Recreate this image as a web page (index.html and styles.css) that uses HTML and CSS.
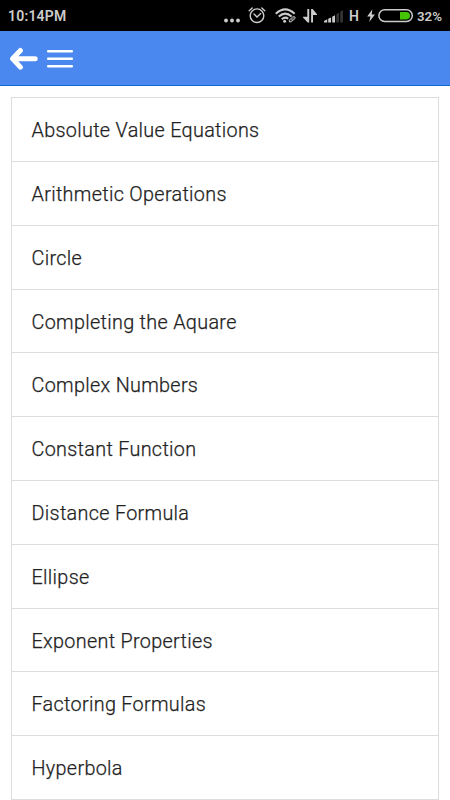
FILE: index.html
```html
<!DOCTYPE html>
<html lang="en">
<head>
    <meta charset="UTF-8">
    <meta name="viewport" content="width=device-width, initial-scale=1.0">
    <title>Algebra Formulas</title>
    <link rel="stylesheet" href="styles.css">
</head>
<body>
    <div class="status-bar">
        <span class="time">10:14PM</span>
        <div class="status-icons">
            <svg class="dots" width="16" height="30" viewBox="0 0 16 30" fill="#ccc">
                <circle cx="2" cy="20.5" r="1.9"/>
                <circle cx="8" cy="20.5" r="1.9"/>
                <circle cx="14" cy="20.5" r="1.9"/>
            </svg>
            <svg class="alarm" width="18" height="30" viewBox="0 0 18 30" fill="none" stroke="#ccc" stroke-width="1.4" stroke-linecap="round">
                <circle cx="9" cy="15.7" r="6.8"/>
                <path d="M1.2 10.7 L4.2 8 M13.8 8 L16.8 10.7 M6 14 L9 17 L12.7 13.6"/>
            </svg>
            <svg class="wifi" width="22" height="30" viewBox="0 0 22 30" fill="none" stroke="#ccc" stroke-width="2">
                <path d="M.8 13.7 Q10.2 5 19.6 13.7"/>
                <path d="M3.8 16.6 Q10.2 10.6 16.6 16.6"/>
                <path d="M6.8 19.2 Q10.2 16.2 13.2 18.8"/>
                <circle cx="9.6" cy="21.3" r="1.5" fill="#ccc" stroke="none"/>
                <path d="M14.2 20.2 L17.8 16.9 Q20.5 16 20.2 18.3 L16.3 21.8 Q13.6 22.8 14.2 20.2 M15.7 20.6 L18.7 18" stroke-width="1"/>
            </svg>
            <svg class="data" width="15" height="30" viewBox="0 0 15 30" fill="#ccc">
                <path d="M4.3 9 H6.2 V22.6 H4.7 L0 17.4 V16.8 H4.3 Z"/>
                <path d="M8.1 9 H9.7 L14 14.3 V15 H10 V22.6 H8.1 Z"/>
            </svg>
            <svg class="signal" width="20" height="30" viewBox="0 0 20 30" fill="#ccc">
                <path d="M0 22.5 V21 L3.2 19.3 V22.5 Z"/>
                <path d="M4.2 22.5 V18.8 L7 17.4 V22.5 Z"/>
                <path d="M8.2 22.5 V16.8 L11 15.2 V22.5 Z"/>
                <path d="M12.3 22.5 V14.2 L15 12.5 V22.5 Z M16.2 22.5 V11.7 L19 10 V22.5 Z" fill="#333"/>
            </svg>
            <span class="network">H</span>
            <svg class="bolt" width="8" height="30" viewBox="0 0 8 30" fill="#ccc">
                <path d="M5.4 9.3 L.2 16.4 H3.4 L2.3 22 L7.9 14.6 H4.7 Z"/>
            </svg>
            <svg class="battery" width="36" height="30" viewBox="0 0 36 30">
                <rect x=".9" y="9.8" width="33.4" height="11.7" rx="5.8" fill="none" stroke="#ccc" stroke-width="1.5"/>
                <path d="M22 12 H28.5 Q32 12.3 32 15.7 Q32 19 28.5 19.4 H22 Z" fill="#45c405"/>
            </svg>
            <span class="percent">32%</span>
        </div>
    </div>

    <nav>
        <a class="back">
            <svg width="28" height="24" viewBox="0 0 28 24" fill="none" stroke="#fff" stroke-width="5" stroke-linecap="round" stroke-linejoin="round">
                <path d="M25.2 12.8 H4 M10.4 4.5 L2.6 12.8 L10.4 21.1"/>
            </svg>
        </a>
        <a class="menu">
            <svg width="26" height="24" viewBox="0 0 26 24" fill="#fff">
                <rect x="0" y="4" width="26" height="2.6" rx="1"/>
                <rect x="0" y="11.4" width="26" height="2.6" rx="1"/>
                <rect x="0" y="19" width="26" height="2.6" rx="1"/>
            </svg>
        </a>
    </nav>

    <ul class="topic-list">
        <li>Absolute Value Equations</li>
        <li>Arithmetic Operations</li>
        <li>Circle</li>
        <li>Completing the Aquare</li>
        <li>Complex Numbers</li>
        <li>Constant Function</li>
        <li>Distance Formula</li>
        <li>Ellipse</li>
        <li>Exponent Properties</li>
        <li>Factoring Formulas</li>
        <li>Hyperbola</li>
    </ul>
</body>
</html>
```
FILE: styles.css
```css
body {
    font-family: Roboto, "Liberation Sans", sans-serif;
    margin: 0;
    padding: 0;
    background-color: #fff;
    height: 800px;
    overflow: hidden;
}
.status-bar {
    display: flex;
    justify-content: space-between;
    box-sizing: border-box;
    height: 31px;
    padding: 0 8px;
    background-color: #000;
    color: #ccc;
    font-size: 14px;
    font-weight: 600;
    line-height: 33px;
}
.time {
    letter-spacing: 0.2px;
}
.status-icons {
    display: flex;
}
.status-icons svg {
    display: block;
}
.dots {
    margin-right: 8px;
}
.alarm {
    margin-right: 9px;
}
.wifi {
    margin-right: 6px;
}
.data {
    margin-right: 6px;
}
.signal {
    margin-right: 5px;
}
.network {
    width: 11px;
    margin-right: 7px;
}
.bolt {
    margin-right: 3px;
}
.battery {
    margin-right: 3px;
}
.percent {
    font-size: 13.3px;
    width: 25px;
    white-space: nowrap;
}
nav {
    display: flex;
    align-items: center;
    gap: 9px;
    box-sizing: border-box;
    height: 55px;
    padding: 0 10px;
    background-color: #4a87ee;
    border-bottom: 1px solid #1468d0;
}
nav svg {
    display: block;
}
.topic-list {
    list-style-type: none;
    margin: 11px 11px 0;
    padding: 0;
    border: 1px solid #ddd;
}
.topic-list li {
    box-sizing: border-box;
    height: 63.8px;
    padding: 0 19px 0 19.5px;
    border-bottom: 1px solid #ddd;
    color: #222;
    font-size: 19.8px;
    font-weight: 300;
    letter-spacing: 0.32px;
    line-height: 66px;
    -webkit-text-stroke: 0.25px #222;
}
.topic-list li:first-child {
    height: 64px;
}
.topic-list li:last-child {
    height: 62.8px;
    border-bottom: none;
}
```
